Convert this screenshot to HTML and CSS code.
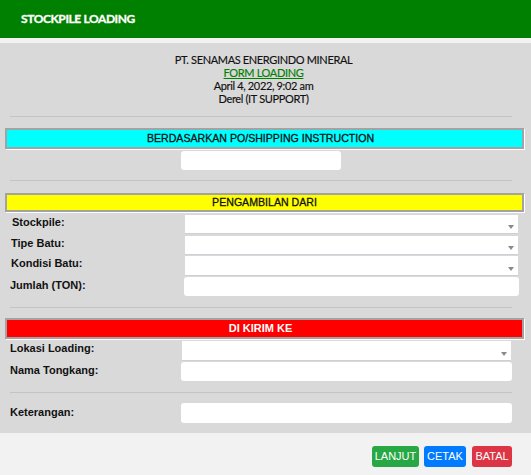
FILE: index.html
```html
<!DOCTYPE html>
<html lang="id">
<head>
<meta charset="utf-8">
<title>Stockpile Loading</title>
<link rel="stylesheet" href="styles.css">
</head>
<body>
<header class="topbar">STOCKPILE LOADING</header>
<main class="main">
  <div class="info">
    <div>PT. SENAMAS ENERGINDO MINERAL</div>
    <div><a class="info-link" href="#">FORM LOADING</a></div>
    <div>April 4, 2022, 9:02 am</div>
    <div>Derel (IT SUPPORT)</div>
  </div>

  <div class="rule rule-a"></div>
  <div class="bar bar-cyan">BERDASARKAN PO/SHIPPING INSTRUCTION</div>
  <div class="po-wrap"><input class="field po" type="text"></div>

  <div class="rule rule-b"></div>
  <div class="bar bar-yellow">PENGAMBILAN DARI</div>
  <div class="row row-1"><label class="lbl lbl-s">Stockpile:</label><div class="select sel-wide"><svg class="arrow" width="6" height="4" viewBox="0 0 6 4"><path d="M0 0H6L3 4Z" fill="#8a8a8a"/></svg></div></div>
  <div class="row row-2"><label class="lbl lbl-t">Tipe Batu:</label><div class="select sel-wide"><svg class="arrow" width="6" height="4" viewBox="0 0 6 4"><path d="M0 0H6L3 4Z" fill="#8a8a8a"/></svg></div></div>
  <div class="row row-3"><label class="lbl lbl-k">Kondisi Batu:</label><div class="select sel-wide sel-tall"><svg class="arrow" width="6" height="4" viewBox="0 0 6 4"><path d="M0 0H6L3 4Z" fill="#8a8a8a"/></svg></div></div>
  <div class="row row-4"><label class="lbl lbl-j">Jumlah (TON):</label><input class="field in-wide" type="text"></div>

  <div class="rule rule-c"></div>
  <div class="bar bar-red">DI KIRIM KE</div>
  <div class="row row-5"><label class="lbl lbl-l">Lokasi Loading:</label><div class="select sel-b"><svg class="arrow" width="6" height="4" viewBox="0 0 6 4"><path d="M0 0H6L3 4Z" fill="#8a8a8a"/></svg></div></div>
  <div class="row row-6"><label class="lbl lbl-n">Nama Tongkang:</label><input class="field in-b" type="text"></div>

  <div class="rule rule-d"></div>
  <div class="row row-7"><label class="lbl lbl-ket">Keterangan:</label><input class="field in-b in-ket" type="text"></div>
</main>
<footer class="footer">
  <button class="btn btn-green">LANJUT</button>
  <button class="btn btn-blue">CETAK</button>
  <button class="btn btn-red">BATAL</button>
</footer>
</body>
</html>
```
FILE: styles.css
```css
html, body { margin: 0; padding: 0; background: #f2f2f2; }
body { width: 531px; height: 475px; overflow: hidden; font-family: "Liberation Sans", Arial, sans-serif; }

.topbar {
  height: 38px; line-height: 38px; background: #008000; color: #fff;
  font-family: Lato, "Open Sans", sans-serif; font-weight: 700; font-size: 12px;
  letter-spacing: -0.4px; padding-left: 21px;
  -webkit-text-stroke: 0.3px #fff;
}

.main {
  margin-top: 5px; background: #d9d9d9; padding: 10px 0 10px 0;
  display: flex; flex-direction: column;
}

.info {
  text-align: center; font-family: Lato, "Open Sans", sans-serif; font-size: 11px;
  line-height: 13px; color: #111; padding-right: 4px; letter-spacing: -0.35px;
  -webkit-text-stroke: 0.15px #111;
}
.info-link { color: #008000; text-decoration: underline; -webkit-text-stroke: 0.15px #008000; }

.rule { height: 1px; background: #c3c3c3; margin-left: 10px; margin-right: 19px; }
.rule-a { margin-top: 11px; }
.rule-b { margin-top: 10px; }
.rule-c { margin-top: 11px; }
.rule-d { margin-top: 11px; }

.bar {
  margin-left: 5px; margin-right: 7px; border: 2px solid #a3a3a3;
  box-shadow: 1px 1px 0 #fff; text-align: center; font-size: 10.6px; color: #111;
  -webkit-text-stroke: 0.3px #111;
}
.bar-cyan { margin-top: 11px; background: #00ffff; height: 17px; line-height: 17px; padding-right: 8px; }
.bar-yellow { margin-top: 12px; background: #ffff00; height: 15px; line-height: 15px; }
.bar-red { margin-top: 10px; background: #ff0000; height: 17px; line-height: 17px; color: #fff; font-weight: 700; font-size: 11px; -webkit-text-stroke: 0; padding-right: 8px; }

.field {
  display: block; box-sizing: border-box; border: 0; background: #fff;
  border-radius: 3px; padding: 0; margin: 0; outline: none;
}
.po-wrap { margin-top: 2px; padding-left: 181px; }
.po { width: 160px; height: 19px; }

.row { display: flex; align-items: flex-start; }
.row-1 { margin-top: 3px; }
.row-2 { margin-top: 3px; }
.row-3 { margin-top: 2px; }
.row-4 { margin-top: 2px; }
.row-5 { margin-top: 2px; }
.row-6 { margin-top: 2px; }
.row-7 { margin-top: 10px; }

.lbl { font-size: 11px; font-weight: 700; line-height: 14px; color: #111; box-sizing: border-box; }
.lbl-s { width: 185px; padding-left: 12px; }
.lbl-t { width: 185px; padding-left: 11px; }
.lbl-k { width: 185px; padding-left: 11px; padding-top: 0; }
.lbl-j { width: 184px; padding-left: 10px; padding-top: 1px; }
.lbl-l { width: 182px; padding-left: 10px; }
.lbl-n { width: 181px; padding-left: 10px; padding-top: 1px; }
.lbl-ket { width: 181px; padding-left: 10px; padding-top: 2px; }

.select {
  box-sizing: border-box; background: #fff; height: 18px;
  display: flex; justify-content: flex-end; align-items: flex-end;
  padding: 0 4px 4px 0; box-shadow: 0 1px 0 #cdd0d6;
}
.sel-wide { width: 333px; }
.sel-tall { height: 19px; }
.sel-b { width: 329px; height: 19px; }
.arrow { display: block; }

.in-wide { width: 335px; height: 19px; }
.in-b { width: 331px; height: 19px; }
.in-ket { height: 20px; }

.footer {
  display: flex; justify-content: flex-end; gap: 5px;
  padding: 13px 19px 0 0;
}
.btn {
  height: 21px; border: 0; border-radius: 3px; color: #fff;
  font-family: "Liberation Sans", Arial, sans-serif; font-size: 11px;
  padding: 0; line-height: 21px; margin: 0; text-align: center;
}
.btn-green { background: #28a745; width: 47px; }
.btn-blue { background: #007bff; width: 42px; }
.btn-red { background: #dc3545; width: 40px; margin-left: 1px; }
```
